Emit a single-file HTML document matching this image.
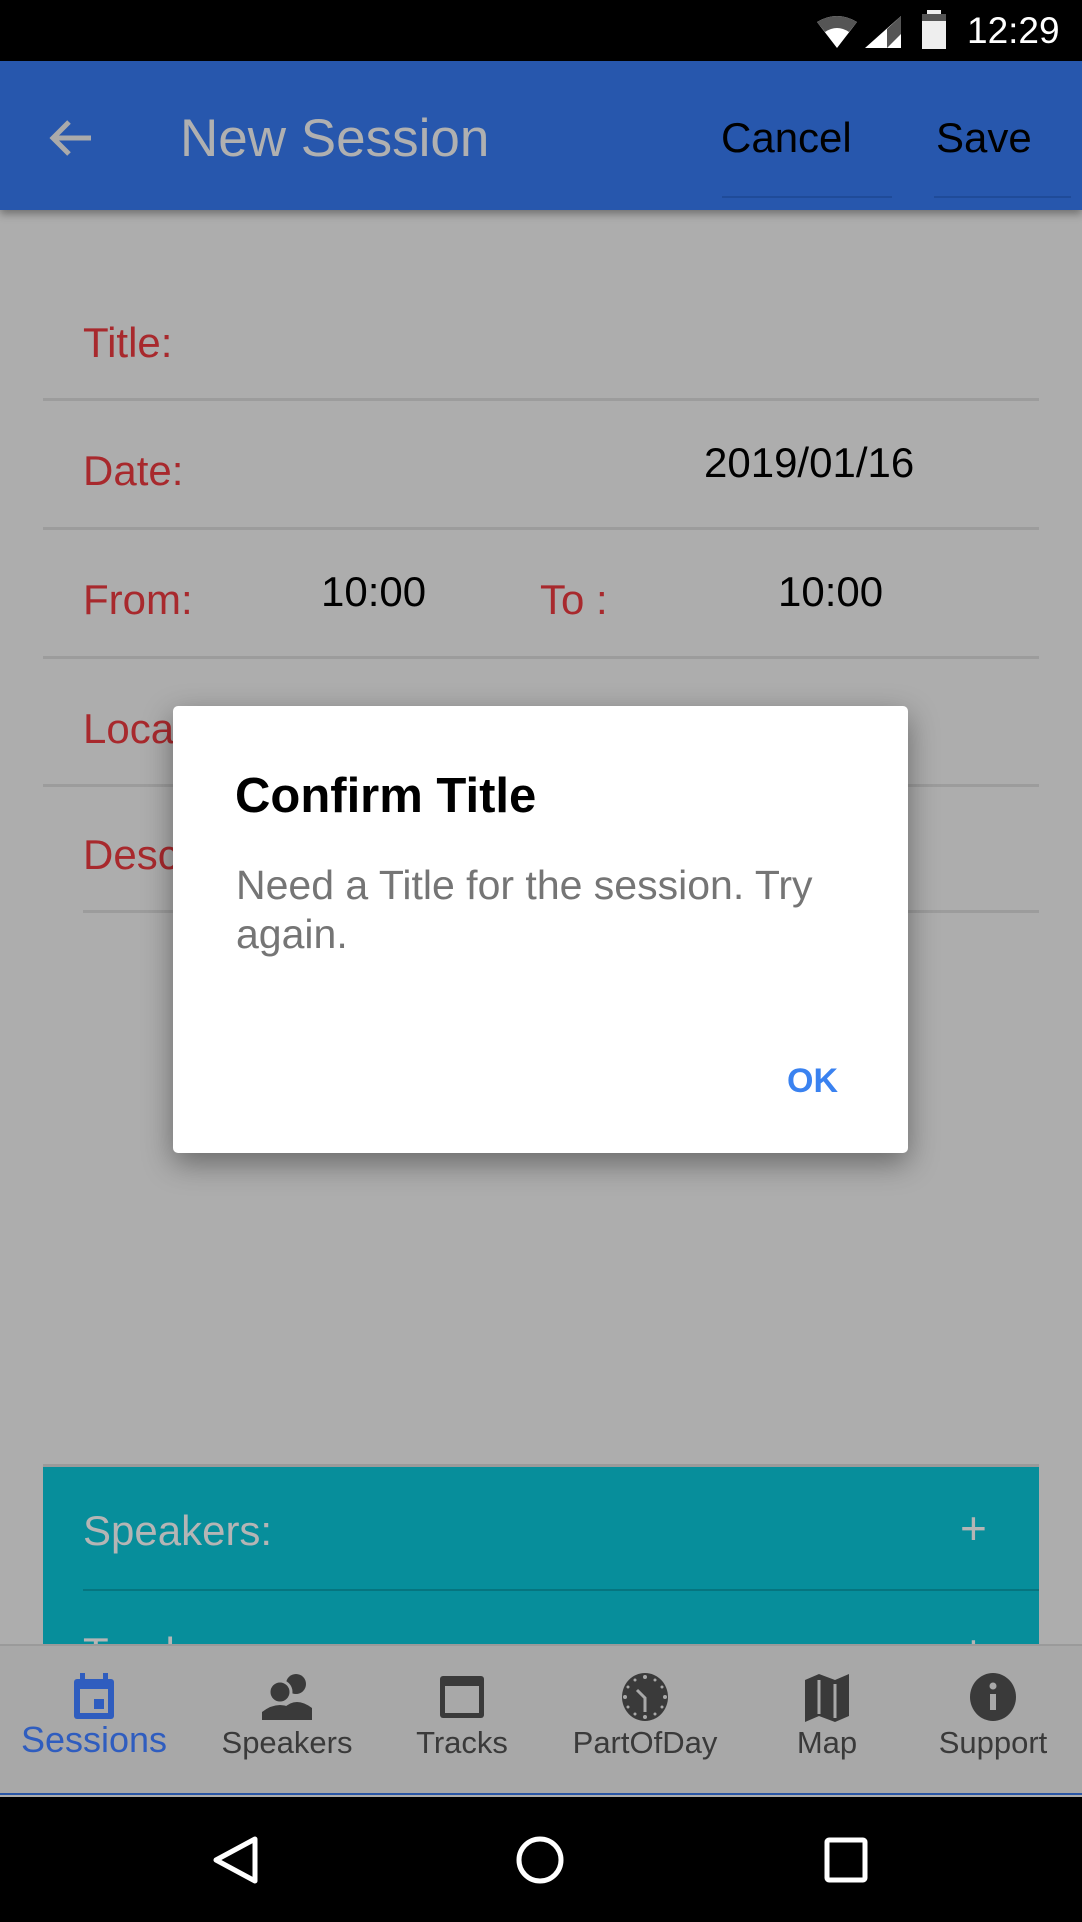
<!DOCTYPE html>
<html><head><meta charset="utf-8"><style>
*{margin:0;padding:0;box-sizing:border-box}
body{width:1082px;height:1922px;position:relative;overflow:hidden;background:#adadad;font-family:"Liberation Sans",sans-serif}
.a{position:absolute;white-space:nowrap}
.lbl{color:#a8292d;font-size:42px;line-height:50px}
.val{color:#000;font-size:42px;line-height:50px}
.hr{position:absolute;height:3px;background:#9c9c9c}
.nl{position:absolute;font-size:31px;line-height:36px;color:#3a3a3a;text-align:center;width:180px;top:1725px}
</style></head><body>
<div class="a" style="left:0;top:0;width:1082px;height:61px;background:#000"></div>
<svg class="a" style="left:815px;top:14px" width="90" height="36" viewBox="0 0 90 36">
<path d="M2 8 Q22 -4 42 8 L22 34 Z" fill="#fff"/><path d="M2 8 Q22 -4 42 8 L34 18 Q22 10 10 18 Z" fill="#555"/>
<path d="M50 34 L86 2 L86 34 Z" fill="#fff"/><path d="M72 34 L86 20 L86 2 L72 15 Z" fill="#555"/></svg>
<div class="a" style="left:922px;top:14px;width:24px;height:35px;background:#eee"></div>
<div class="a" style="left:927px;top:10px;width:14px;height:5px;background:#eee"></div>
<div class="a" style="left:922px;top:14px;width:24px;height:7px;background:#555"></div>
<div class="a" style="left:967px;top:9px;font-size:37px;line-height:44px;color:#fff">12:29</div>
<div class="a" style="left:0;top:61px;width:1082px;height:149px;background:#2757ad;box-shadow:0 4px 8px rgba(0,0,0,.35)"></div>
<svg class="a" style="left:47px;top:118px" width="46" height="40" viewBox="0 0 46 40"><path d="M44 20 H6 M22 4 L6 20 L22 36" stroke="#aaa" stroke-width="5" fill="none"/></svg>
<div class="a" style="left:180px;top:109px;font-size:53px;line-height:60px;color:#b0b0b0">New Session</div>
<div class="a" style="left:721px;top:113px;font-size:42px;line-height:50px;color:#000">Cancel</div>
<div class="a" style="left:936px;top:113px;font-size:42px;line-height:50px;color:#000">Save</div>
<div class="a" style="left:722px;top:196px;width:170px;height:2px;background:#1f4b99"></div>
<div class="a" style="left:934px;top:196px;width:137px;height:2px;background:#1f4b99"></div>

<div class="a lbl" style="left:83px;top:318px">Title:</div>
<div class="hr" style="left:43px;top:398px;width:996px"></div>
<div class="a lbl" style="left:83px;top:446px">Date:</div>
<div class="a val" style="left:704px;top:438px">2019/01/16</div>
<div class="hr" style="left:43px;top:527px;width:996px"></div>
<div class="a lbl" style="left:83px;top:575px">From:</div>
<div class="a val" style="left:321px;top:567px">10:00</div>
<div class="a lbl" style="left:540px;top:575px">To :</div>
<div class="a val" style="left:778px;top:567px">10:00</div>
<div class="hr" style="left:43px;top:656px;width:996px"></div>
<div class="a lbl" style="left:83px;top:704px">Location:</div>
<div class="hr" style="left:43px;top:784px;width:996px"></div>
<div class="a lbl" style="left:83px;top:830px">Description:</div>
<div class="hr" style="left:83px;top:910px;width:956px"></div>

<div class="a" style="left:173px;top:706px;width:735px;height:447px;background:#fff;border-radius:5px;box-shadow:0 10px 30px rgba(0,0,0,.4)"></div>
<div class="a" style="left:235px;top:768px;font-size:49px;line-height:56px;font-weight:bold;color:#000">Confirm Title</div>
<div class="a" style="left:236px;top:861px;font-size:41px;line-height:49px;color:#757575">Need a Title for the session. Try<br>again.</div>
<div class="a" style="left:787px;top:1061px;font-size:34px;line-height:40px;font-weight:bold;color:#3a82f0">OK</div>

<div class="a" style="left:43px;top:1464px;width:996px;height:180px;background:#078e9b;border-top:3px solid #9a9a9a"></div>
<div class="a" style="left:83px;top:1506px;font-size:42px;line-height:50px;color:#b5b5b5">Speakers:</div>
<div class="a" style="left:960px;top:1502px;font-size:46px;line-height:52px;color:#b5b5b5">+</div>
<div class="a" style="left:83px;top:1589px;width:956px;height:2px;background:#06757f"></div>
<div class="a" style="left:83px;top:1628px;font-size:42px;line-height:50px;color:#b5b5b5">Tracks:</div>
<div class="a" style="left:960px;top:1625px;font-size:46px;line-height:52px;color:#b5b5b5">+</div>

<div class="a" style="left:0;top:1644px;width:1082px;height:151px;background:#a8a8a8;border-top:2px solid #9a9a9a;border-bottom:2px solid #2a56a5"></div>
<svg class="a" style="left:72px;top:1671px" width="44" height="50" viewBox="0 0 44 50"><rect x="2" y="8" width="40" height="40" rx="3" fill="#2f5dbf"/><rect x="8" y="18" width="28" height="24" fill="#a8a8a8"/><rect x="8" y="2" width="5" height="10" fill="#2f5dbf"/><rect x="31" y="2" width="5" height="10" fill="#2f5dbf"/><rect x="22" y="28" width="10" height="10" fill="#2f5dbf"/></svg>
<svg class="a" style="left:262px;top:1672px" width="50" height="48" viewBox="0 0 50 48"><circle cx="34" cy="12" r="10" fill="#3a3a3a"/><path d="M22 48 V36 Q34 24 50 36 V48Z" fill="#3a3a3a"/><circle cx="18" cy="20" r="11" fill="#3a3a3a" stroke="#a8a8a8" stroke-width="3"/><path d="M0 48 V40 Q18 26 36 40 V48Z" fill="#3a3a3a"/></svg>
<svg class="a" style="left:438px;top:1674px" width="48" height="46" viewBox="0 0 48 46"><rect x="2" y="2" width="44" height="42" rx="3" fill="#3a3a3a"/><rect x="7" y="12" width="34" height="27" fill="#a8a8a8"/></svg>
<svg class="a" style="left:621px;top:1672px" width="48" height="50" viewBox="0 0 48 50"><ellipse cx="24" cy="25" rx="23" ry="24" fill="#3a3a3a"/><g fill="#a8a8a8"><circle cx="24" cy="5" r="2"/><circle cx="24" cy="45" r="2"/><circle cx="4" cy="25" r="2"/><circle cx="44" cy="25" r="2"/><circle cx="34" cy="8" r="1.5"/><circle cx="14" cy="8" r="1.5"/><circle cx="34" cy="42" r="1.5"/><circle cx="14" cy="42" r="1.5"/><circle cx="7" cy="15" r="1.5"/><circle cx="41" cy="15" r="1.5"/><circle cx="7" cy="35" r="1.5"/><circle cx="41" cy="35" r="1.5"/></g><path d="M16 18 L24 26 V40" stroke="#a8a8a8" stroke-width="3" fill="none"/></svg>
<svg class="a" style="left:805px;top:1674px" width="44" height="48" viewBox="0 0 44 48"><path d="M0 6 L14 0 L30 6 L44 0 V42 L30 48 L14 42 L0 48Z" fill="#3a3a3a"/><path d="M14 6 V40 M30 10 V44" stroke="#a8a8a8" stroke-width="3"/></svg>
<svg class="a" style="left:969px;top:1672px" width="48" height="50" viewBox="0 0 48 50"><ellipse cx="24" cy="25" rx="23" ry="24" fill="#3a3a3a"/><rect x="21" y="22" width="6" height="16" fill="#a8a8a8"/><circle cx="24" cy="14" r="3.5" fill="#a8a8a8"/></svg>
<div class="nl" style="left:4px;color:#2f5dbf;font-size:36px;top:1722px;width:180px">Sessions</div>
<div class="nl" style="left:197px">Speakers</div>
<div class="nl" style="left:372px">Tracks</div>
<div class="nl" style="left:555px">PartOfDay</div>
<div class="nl" style="left:737px">Map</div>
<div class="nl" style="left:903px">Support</div>

<div class="a" style="left:0;top:1797px;width:1082px;height:125px;background:#000"></div>
<svg class="a" style="left:210px;top:1835px" width="50" height="50" viewBox="0 0 50 50"><path d="M45 4 L45 46 L6 25 Z" stroke="#fff" stroke-width="5" fill="none" stroke-linejoin="round"/></svg>
<svg class="a" style="left:515px;top:1835px" width="50" height="50" viewBox="0 0 50 50"><circle cx="25" cy="25" r="21" stroke="#fff" stroke-width="5" fill="none"/></svg>
<svg class="a" style="left:824px;top:1837px" width="44" height="46" viewBox="0 0 44 46"><rect x="3" y="3" width="38" height="40" rx="2" stroke="#fff" stroke-width="5" fill="none"/></svg>
</body></html>
